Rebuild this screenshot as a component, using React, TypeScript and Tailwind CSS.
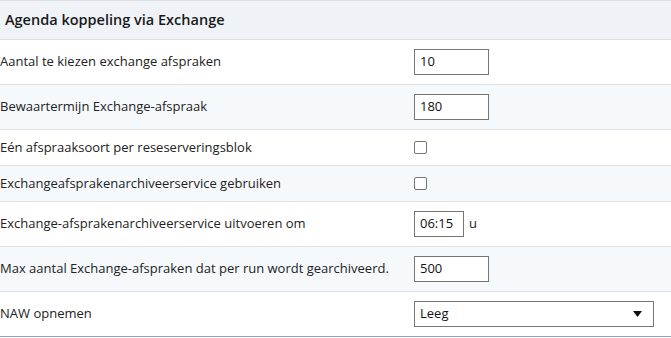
const rows: { label: string; kind: "text" | "check" | "time" | "select"; value?: string; tall: boolean }[] = [
  { label: "Aantal te kiezen exchange afspraken", kind: "text", value: "10", tall: true },
  { label: "Bewaartermijn Exchange-afspraak", kind: "text", value: "180", tall: true },
  { label: "Eén afspraaksoort per reseserveringsblok", kind: "check", tall: false },
  { label: "Exchangeafsprakenarchiveerservice gebruiken", kind: "check", tall: false },
  { label: "Exchange-afsprakenarchiveerservice uitvoeren om", kind: "time", value: "06:15", tall: true },
  { label: "Max aantal Exchange-afspraken dat per run wordt gearchiveerd.", kind: "text", value: "500", tall: true },
  { label: "NAW opnemen", kind: "select", value: "Leeg", tall: true },
];

const Control = ({ row }: { row: (typeof rows)[number] }) => {
  if (row.kind === "check") {
    return <div className="w-[13px] h-[13px] border border-[#767676] rounded-[2px] bg-white" />;
  }
  if (row.kind === "time") {
    return (
      <div className="flex items-center gap-[5px]">
        <div className="w-[50px] h-[26px] border border-[#767676] bg-white flex items-center pl-[5px] text-[13px] text-[#111]">{row.value}</div>
        <span className="text-[13px] text-[#222]">u</span>
      </div>
    );
  }
  if (row.kind === "select") {
    return (
      <div className="w-[240px] h-[26px] border border-[#767676] bg-white flex items-center justify-between pl-[5px] pr-[11px] text-[13px] text-[#111]">
        <span>{row.value}</span>
        <svg width="9" height="6" viewBox="0 0 9 6"><path d="M0 0h9L4.5 6z" fill="#111" /></svg>
      </div>
    );
  }
  return <div className="w-[75px] h-[26px] border border-[#767676] bg-white flex items-center pl-[5px] text-[13px] text-[#111]">{row.value}</div>;
};

export default function App() {
  return (
    <div className="w-[671px] h-[338px] bg-white overflow-hidden font-['Open_Sans',sans-serif]">
      <div className="border-t border-[#dcdfe3] bg-[#eff3f8] h-[40px] border-b flex items-center pl-[5px]">
        <span className="text-[14.5px] font-semibold text-[#1a1a1a]">Agenda koppeling via Exchange</span>
      </div>
      {rows.map((row, i) => (
        <div
          key={row.label}
          className={`flex items-center border-b ${i === rows.length - 1 ? "border-[#8fa6c6]" : "border-[#dcdfe3]"} ${row.tall ? "h-[45px]" : "h-[36px]"} ${i % 2 === 1 ? "bg-[#f5f9fc]" : "bg-white"}`}
        >
          <div className="w-[414px] shrink-0 text-[13px] text-[#222] whitespace-nowrap">{row.label}</div>
          <Control row={row} />
        </div>
      ))}
    </div>
  );
}
